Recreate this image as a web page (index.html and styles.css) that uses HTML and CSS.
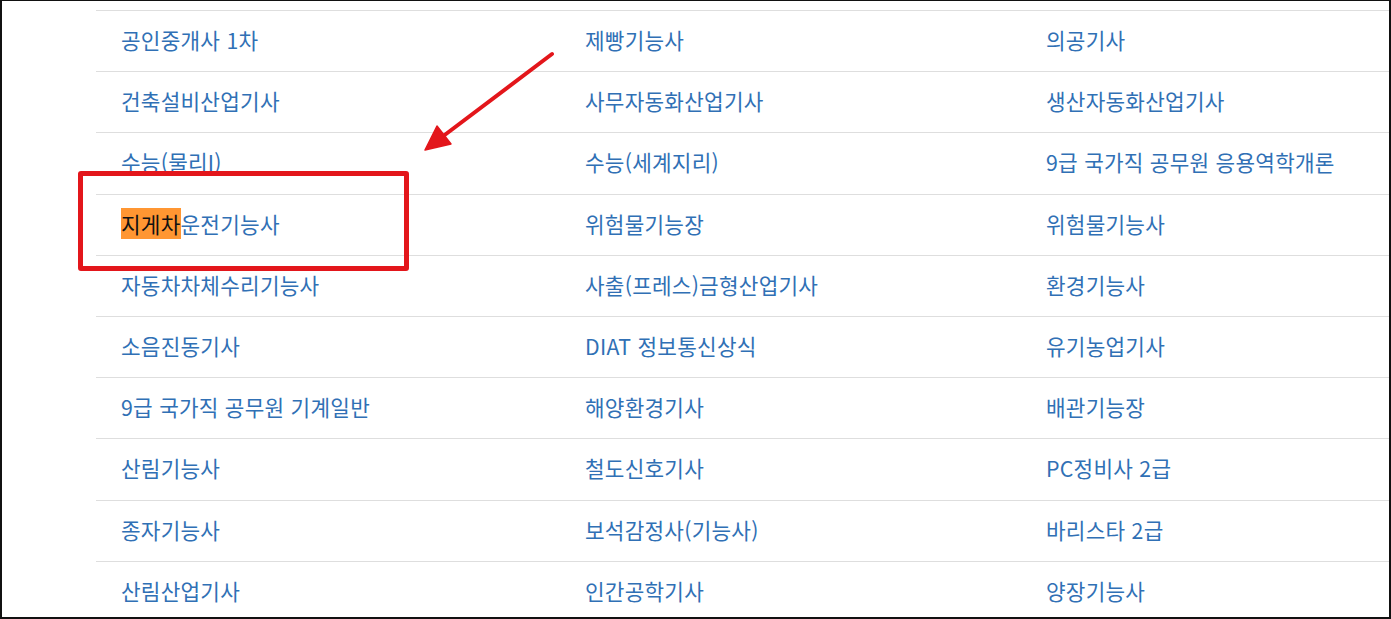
FILE: index.html
```html
<!DOCTYPE html>
<html lang="ko">
<head>
<meta charset="utf-8">
<title>자격증 목록</title>
<link rel="stylesheet" href="styles.css">
</head>
<body>
<div class="frame">
  <div class="table">
    <div class="row"><a class="cell">공인중개사 1차</a><a class="cell">제빵기능사</a><a class="cell">의공기사</a></div>
    <div class="row"><a class="cell">건축설비산업기사</a><a class="cell">사무자동화산업기사</a><a class="cell">생산자동화산업기사</a></div>
    <div class="row"><a class="cell">수능(물리I)</a><a class="cell">수능(세계지리)</a><a class="cell">9급 국가직 공무원 응용역학개론</a></div>
    <div class="row"><a class="cell"><mark class="hit">지게차</mark>운전기능사</a><a class="cell">위험물기능장</a><a class="cell">위험물기능사</a></div>
    <div class="row"><a class="cell">자동차차체수리기능사</a><a class="cell">사출(프레스)금형산업기사</a><a class="cell">환경기능사</a></div>
    <div class="row"><a class="cell">소음진동기사</a><a class="cell">DIAT 정보통신상식</a><a class="cell">유기농업기사</a></div>
    <div class="row"><a class="cell">9급 국가직 공무원 기계일반</a><a class="cell">해양환경기사</a><a class="cell">배관기능장</a></div>
    <div class="row"><a class="cell">산림기능사</a><a class="cell">철도신호기사</a><a class="cell">PC정비사 2급</a></div>
    <div class="row"><a class="cell">종자기능사</a><a class="cell">보석감정사(기능사)</a><a class="cell">바리스타 2급</a></div>
    <div class="row"><a class="cell">산림산업기사</a><a class="cell">인간공학기사</a><a class="cell">양장기능사</a></div>
  </div>
</div>
<div class="callout"></div>
<svg class="arrow" width="1391" height="619" viewBox="0 0 1391 619">
  <line x1="552" y1="54" x2="442" y2="137" stroke="#e3161b" stroke-width="4" stroke-linecap="round"/>
  <polygon points="425,150 451,144 437,126" fill="#e3161b" stroke="#e3161b" stroke-width="1.5" stroke-linejoin="round"/>
</svg>
</body>
</html>
```

FILE: styles.css
```css
html, body {
  margin: 0;
  padding: 0;
  background: #fff;
}
body {
  position: relative;
  width: 1391px;
  height: 619px;
  overflow: hidden;
  font-family: "Noto Sans CJK KR", "Noto Sans", sans-serif;
}
.frame {
  box-sizing: border-box;
  width: 1391px;
  height: 619px;
  border: 2px solid #111;
  border-top-width: 1px;
  overflow: hidden;
  background: #fff;
}
.table {
  margin-left: 94px;
  margin-top: 9px;
  width: 1390px;
}
.row {
  display: grid;
  grid-template-columns: 464px 461px 465px;
  border-top: 1px solid #dedede;
  height: 60.2px;
}
.cell {
  display: flex;
  align-items: center;
  padding-left: 25px;
  padding-bottom: 3px;
  font-size: 21.3px;
  letter-spacing: 0.25px;
  color: #3070b5;
  white-space: nowrap;
  text-decoration: none;
}
.hit {
  background: #ff9632;
  color: #111;
}
.callout {
  position: absolute;
  left: 78px;
  top: 171px;
  width: 331px;
  height: 100px;
  box-sizing: border-box;
  border: 5px solid #e3161b;
  border-radius: 3px;
}
.arrow {
  position: absolute;
  left: 0;
  top: 0;
  pointer-events: none;
}
```
